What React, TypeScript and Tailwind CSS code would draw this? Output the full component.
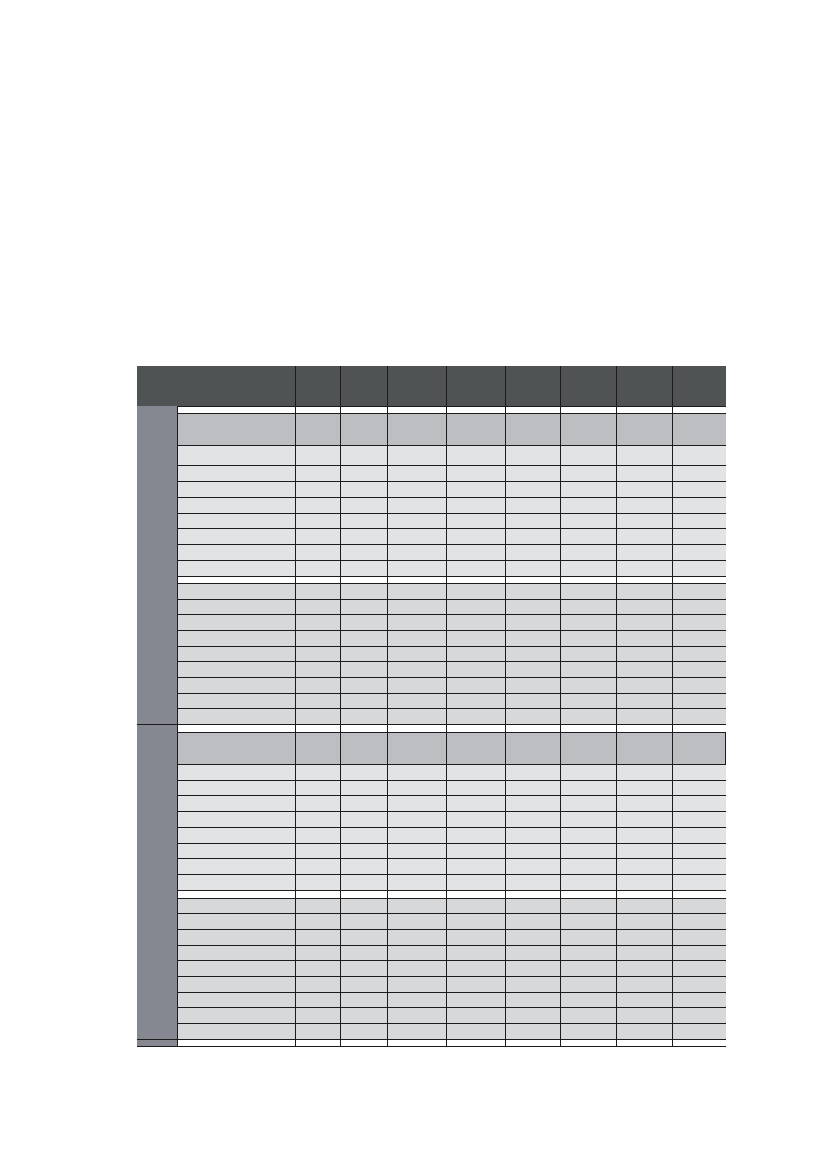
const cols = [118, 45, 47, 59, 59, 55, 56, 56, 54];

type Kind = "white" | "band" | "light" | "dark";

type Row = { kind: Kind; h: number; sideLine?: boolean; rightEdge?: boolean };

const fill: Record<Kind, string> = {
  white: "bg-white",
  band: "bg-[#bdbec2]",
  light: "bg-[#e2e3e5]",
  dark: "bg-[#d7d8d9]",
};

function section(first: boolean): Row[] {
  const rows: Row[] = [];
  rows.push({ kind: "white", h: first ? 7 : 8, sideLine: !first });
  rows.push({ kind: "band", h: 32, rightEdge: !first });
  for (let i = 0; i < 8; i++) {
    if (first) rows.push({ kind: "light", h: i === 0 ? 20 : 111 / 7 });
    else rows.push({ kind: "light", h: 126 / 8 });
  }
  rows.push({ kind: "white", h: first ? 7 : 8 });
  for (let i = 0; i < 9; i++) rows.push({ kind: "dark", h: 141 / 9 });
  return rows;
}

const rows: Row[] = [
  ...section(true),
  ...section(false),
  { kind: "white", h: 8, sideLine: true },
];

function TableRow({ row, last }: { row: Row; last: boolean }) {
  return (
    <div className="flex" style={{ height: row.h }}>
      <div
        className={
          "w-[40px] shrink-0 bg-[#858891] " +
          (row.sideLine ? "border-t border-[#1c1c1c] " : "") +
          (last ? "border-b border-[#1c1c1c]" : "")
        }
      />
      {cols.map((w, i) => (
        <div
          key={i}
          style={{ width: w }}
          className={
            "shrink-0 border-t border-l border-[#1c1c1c] " +
            fill[row.kind] +
            (last ? " border-b" : "") +
            (row.rightEdge && i === cols.length - 1 ? " border-r" : "")
          }
        />
      ))}
    </div>
  );
}

export default function App() {
  return (
    <div className="min-h-[1169px] w-[827px] bg-white pt-[366px] pl-[137px]">
      <div className="flex h-[40px] w-[589px] bg-[#4f5354]">
        <div className="w-[158px] shrink-0" />
        {cols.slice(1).map((w, i) => (
          <div
            key={i}
            style={{ width: w }}
            className="shrink-0 border-l border-[#1c1c1c]"
          />
        ))}
      </div>
      <div className="flex w-[589px] flex-col">
        {rows.map((r, i) => (
          <TableRow key={i} row={r} last={i === rows.length - 1} />
        ))}
      </div>
    </div>
  );
}
